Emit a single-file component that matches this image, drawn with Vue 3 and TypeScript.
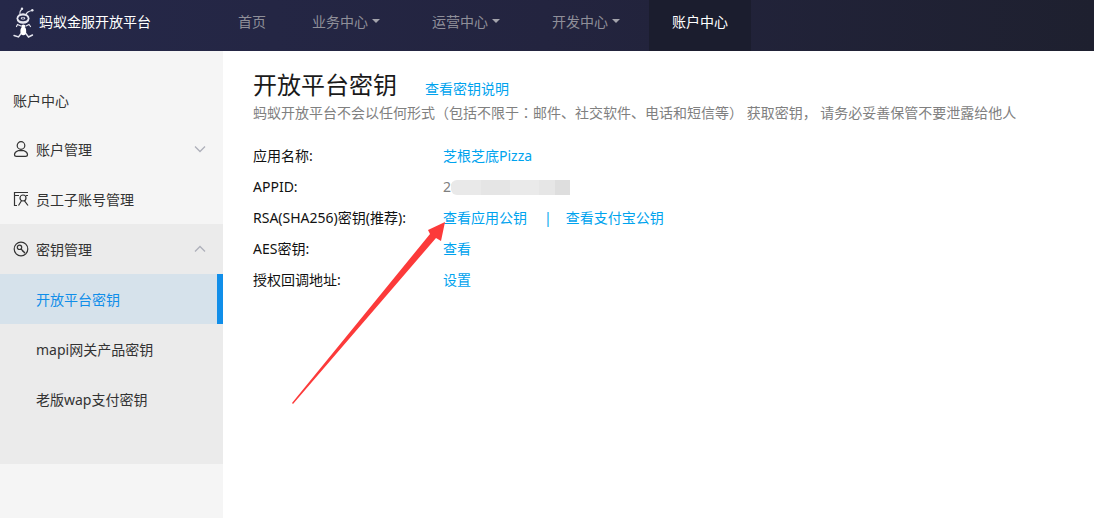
<script setup lang="ts">
interface NavItem {
  label: string
  menu?: boolean
  active?: boolean
}

interface KeyLink {
  label: string
}

interface KeyRow {
  label: string
  links: KeyLink[]
  masked?: string
}

const navItems: NavItem[] = [
  { label: '首页' },
  { label: '业务中心', menu: true },
  { label: '运营中心', menu: true },
  { label: '开发中心', menu: true },
  { label: '账户中心', active: true },
]

const keyPages = [
  { label: '开放平台密钥', active: true },
  { label: 'mapi网关产品密钥', active: false },
  { label: '老版wap支付密钥', active: false },
]

const rows: KeyRow[] = [
  { label: '应用名称:', links: [{ label: '芝根芝底Pizza' }] },
  { label: 'APPID:', links: [], masked: '20' },
  { label: 'RSA(SHA256)密钥(推荐):', links: [{ label: '查看应用公钥' }, { label: '查看支付宝公钥' }] },
  { label: 'AES密钥:', links: [{ label: '查看' }] },
  { label: '授权回调地址:', links: [{ label: '设置' }] },
]
</script>

<template>
  <div class="page">
    <header class="topbar">
      <a class="brand" href="#">
        <svg class="ant" viewBox="0 0 24 34" aria-hidden="true">
          <g fill="none" stroke="#e6e7f0" stroke-linecap="round">
            <path d="M9 8.500Q8.500 5 11 3M15 8.500Q16 5.500 21 4.500" stroke-width="1.100" />
            <path d="M10 20L6.500 18.500L5.500 20.500M15 20L18 18.500L19.500 20.500" stroke-width="1.200" />
            <path d="M10.500 27L7.500 31L3 29.500M14.500 27L17.500 31L21.500 29" stroke-width="1.400" />
          </g>
          <circle cx="11" cy="2.800" r="1.200" fill="#e6e7f0" />
          <circle cx="21.300" cy="4.300" r="1.200" fill="#e6e7f0" />
          <ellipse cx="12" cy="12.500" rx="6.500" ry="5.300" fill="#e6e7f0" />
          <ellipse cx="12" cy="12.300" rx="4.600" ry="2.900" fill="#25284a" />
          <ellipse cx="12" cy="12.300" rx="2.300" ry="1.300" fill="#d4d6e3" />
          <circle cx="12" cy="12.300" r="0.800" fill="#25284a" />
          <ellipse cx="12.300" cy="20" rx="2" ry="1.500" fill="#fff" />
          <ellipse cx="12.300" cy="25" rx="2.900" ry="4.300" fill="#fff" />
        </svg>
        <span>蚂蚁金服开放平台</span>
      </a>
      <nav class="nav">
        <a v-for="item in navItems" :key="item.label" href="#" class="nav-item" :class="{ active: item.active }">
          {{ item.label }}<i v-if="item.menu" class="caret"></i>
        </a>
      </nav>
    </header>

    <div class="body">
      <aside class="side">
        <h2 class="side-title">账户中心</h2>
        <button type="button" class="side-row">
          <svg class="icon" viewBox="0 0 16 16" aria-hidden="true">
            <circle cx="8" cy="4.500" r="3.800" />
            <path d="M5 9.700Q1.500 11 1.500 13.500Q1.500 15.400 3.500 15.400H12.500Q14.500 15.400 14.500 13.500Q14.500 11 11 9.700Z" />
          </svg>
          <span class="row-label">账户管理</span>
          <svg class="chevron" viewBox="0 0 12 8" aria-hidden="true"><path d="M1 1.500L6 6.500L11 1.500" /></svg>
        </button>
        <a href="#" class="side-row">
          <svg class="icon" viewBox="0 0 16 16" aria-hidden="true">
            <path d="M15 1.500H1.500V14.500H4M1.500 4.500H6M13 4.500H15" />
            <circle cx="10" cy="7" r="3" />
            <path d="M8.500 9.800L5.500 14.500M11.500 9.800L15 14.500" />
          </svg>
          <span class="row-label">员工子账号管理</span>
        </a>
        <div class="side-group">
          <button type="button" class="side-row">
            <svg class="icon" viewBox="0 0 16 16" aria-hidden="true">
              <circle cx="8" cy="8" r="6.800" />
              <circle cx="6.500" cy="6.300" r="2.200" />
              <path d="M8 8L12 12M10 10L9.300 10.700M11.500 11.200L10.700 12" />
            </svg>
            <span class="row-label">密钥管理</span>
            <svg class="chevron" viewBox="0 0 12 8" aria-hidden="true"><path d="M1 6.500L6 1.500L11 6.500" /></svg>
          </button>
          <a v-for="page in keyPages" :key="page.label" href="#" class="sub-row" :class="{ active: page.active }">
            {{ page.label }}
          </a>
        </div>
      </aside>

      <main class="main">
        <div class="heading">
          <h1>开放平台密钥</h1>
          <a href="#">查看密钥说明</a>
        </div>
        <p class="notice">
          蚂蚁开放平台不会以任何形式（包括不限于<span class="colon">：</span>邮件、社交软件、电话和短信等） 获取密钥， 请务必妥善保管不要泄露给他人
        </p>
        <dl class="keys">
          <template v-for="row in rows" :key="row.label">
            <dt>{{ row.label }}</dt>
            <dd>
              <template v-for="(link, i) in row.links" :key="link.label">
                <span v-if="i > 0" class="bar">|</span>
                <a href="#">{{ link.label }}</a>
              </template>
              <span v-if="row.masked" class="masked">{{ row.masked }}<i class="mask"></i></span>
            </dd>
          </template>
        </dl>
        <svg class="arrow" viewBox="0 0 154 183" aria-hidden="true">
          <path d="M153 1L136 9L138 13L0 182L1 183L144 17L149 20Z" fill="#fc3a3a" />
        </svg>
      </main>
    </div>
  </div>
</template>

<style>
body {
  margin: 0;
}
</style>

<style scoped>
.page {
  display: flex;
  flex-direction: column;
  min-height: 100vh;
  background: #fff;
  color: #333;
  font: 14px/20px "Noto Sans", "Noto Sans CJK SC", sans-serif;
}

a {
  color: #00a3ee;
  text-decoration: none;
}

.topbar {
  display: flex;
  height: 51px;
  background: linear-gradient(90deg, #252849 0%, #23243f 50%, #1e202f 100%);
}

.brand {
  display: flex;
  flex: none;
  box-sizing: border-box;
  width: 215px;
  padding: 6px 0 0 11px;
  gap: 4px;
  color: #fff;
}

.brand span {
  padding-top: 6px;
}

.ant {
  width: 24px;
  height: 34px;
}

.nav {
  display: flex;
}

.nav-item {
  display: flex;
  align-items: center;
  box-sizing: border-box;
  padding: 0 23px 7px;
  color: #8f8f99;
  white-space: nowrap;
}

.nav-item.active {
  background: #1b1d2e;
  color: #fff;
}

.caret {
  margin: 0 6px 3px 4px;
  border: 4px solid transparent;
  border-top-color: #a4a4ac;
  border-bottom: 0;
}

.body {
  display: flex;
  flex: 1;
}

.side {
  flex: none;
  box-sizing: border-box;
  width: 223px;
  padding-top: 26px;
  background: #f5f5f5;
}

.side-title {
  margin: 0;
  padding-left: 13px;
  font-size: 14px;
  font-weight: 400;
  line-height: 47px;
}

.side-row {
  display: flex;
  align-items: center;
  box-sizing: border-box;
  width: 100%;
  height: 50px;
  padding: 0 17px 0 13px;
  border: 0;
  background: none;
  color: #333;
  font: inherit;
  text-align: left;
}

.icon {
  width: 16px;
  height: 16px;
  margin-right: 7px;
  fill: none;
  stroke: #333;
  stroke-width: 1.2;
}

.row-label {
  flex: 1;
  padding-top: 2px;
}

.chevron {
  width: 12px;
  height: 8px;
  fill: none;
  stroke: #aeb0ba;
  stroke-width: 1.3;
}

.side-group {
  padding-bottom: 40px;
  background: #ebebeb;
}

.sub-row {
  display: block;
  padding: 2px 0 0 36px;
  color: #333;
  line-height: 48px;
}

.sub-row.active {
  border-right: 6px solid #108ee9;
  background: #d6e2eb;
  color: #108ee9;
}

.main {
  position: relative;
  flex: 1;
  min-width: 0;
  padding: 17px 30px;
}

.heading {
  display: flex;
  align-items: baseline;
  gap: 28px;
}

h1 {
  margin: 0;
  color: #1a1a1a;
  font-size: 24px;
  font-weight: 400;
  line-height: 34px;
}

.notice {
  margin: 0;
  color: #808080;
}

.colon {
  font-family: "Noto Sans CJK TC", sans-serif;
}

.keys {
  display: grid;
  grid-template-columns: 190px 1fr;
  margin: 17px 0 0;
  line-height: 31px;
}

dt {
  color: #111;
  white-space: nowrap;
}

dd {
  margin: 0;
  color: #808080;
}

.bar {
  margin: 0 14px 0 17px;
  color: #00a3ee;
}

.masked {
  display: flex;
  align-items: center;
}

.mask {
  width: 119px;
  height: 15px;
  margin: 2px 0 0 -8px;
  border-radius: 6px 0 0 6px;
  background: linear-gradient(90deg, #e9e9e9 0 25%, #e5e5e5 25% 50%, #eaeaea 50% 74%, #e6e6e6 74% 87%, #dedede 87%);
}

.arrow {
  position: absolute;
  top: 170px;
  left: 69px;
  width: 154px;
  height: 183px;
  pointer-events: none;
}
</style>
